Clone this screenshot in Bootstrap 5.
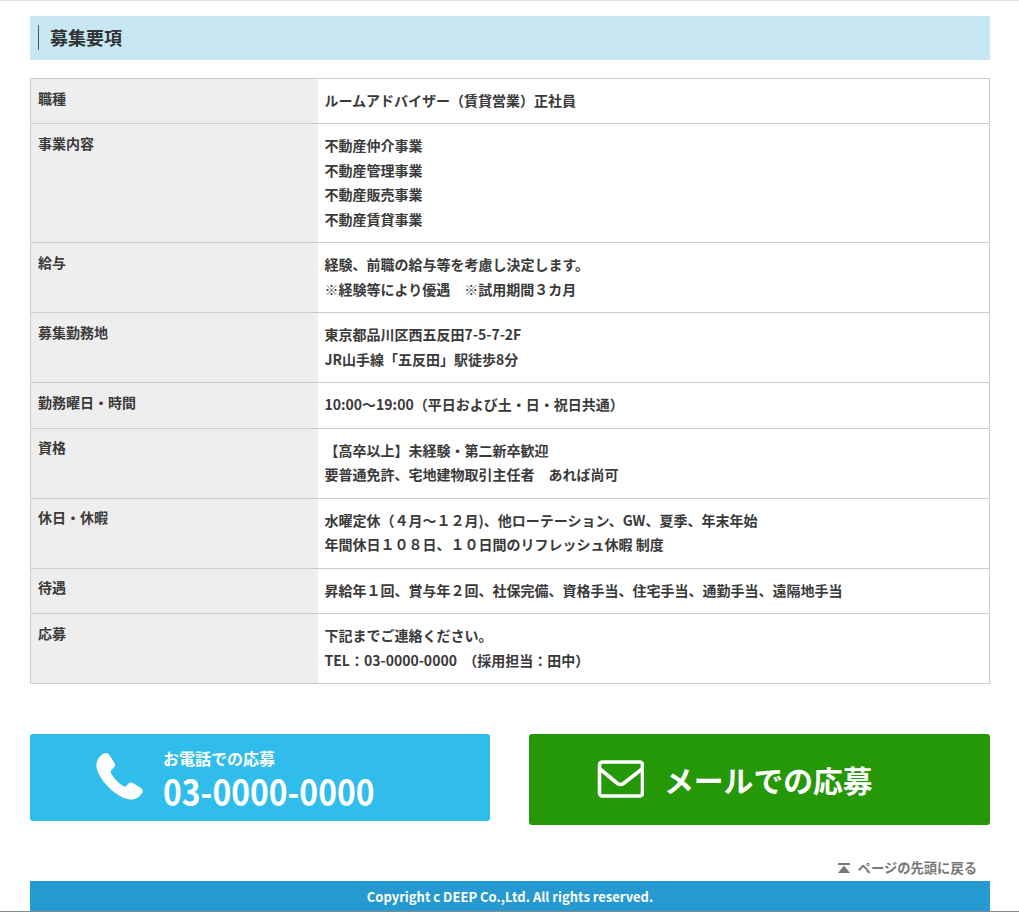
<!DOCTYPE html>
<html lang="ja">
<head>
<meta charset="utf-8">
<title>募集要項</title>
<link href="https://cdn.jsdelivr.net/npm/bootstrap@5.3.0/dist/css/bootstrap.min.css" rel="stylesheet">
<style>
html,body{height:912px;overflow:hidden}
body{font-family:"Noto Sans CJK JP","Noto Sans",sans-serif;color:#333;background:#fff;border-top:1px solid #e3e3e3;position:relative}
.pagewrap{padding:15px 29px 0 30px}
.headbar{background:#c7e8f3;height:44px;padding:0 8px;margin:0 0 18px;font-size:18px;font-weight:700;color:#333;display:flex;align-items:center}
.headbar span{border-left:1px solid #555;padding-left:11px;line-height:24px;margin-top:-2px;padding-bottom:1px}
.jobtable{width:100%;border-collapse:collapse;table-layout:fixed;margin:0;font-size:14px;font-weight:700;color:#3a3a3a}
.jobtable th,.jobtable td{border:1px solid #ccc;vertical-align:top}
.jobtable th{width:287px;background:#eee;padding:6.500px 7px 10px;font-weight:700;font-size:14px;line-height:24px;border-right:0}
.jobtable td{padding:9px 7px 11px;line-height:24.48px;border-left:0;background:#fff}
.cta-row{margin-top:50px;align-items:flex-start;justify-content:space-between}
.cta{display:flex;align-items:center;color:#fff;border-radius:3px;text-decoration:none;font-weight:700}
.cta-tel{background:#30bdeb;width:460px;height:87px;padding-left:65px}
.cta-tel svg{margin-top:-2px}
.cta-mail{background:#259807;width:461px;height:91px;padding-left:68px}
.cta-mail svg{margin-top:-2px}
.tel-sub{font-size:16px;line-height:20px;display:block;margin-top:4px}
.tel-num{font-size:36px;line-height:44px;display:block;transform:scaleX(.885);transform-origin:left center}
.tel-text{margin-left:18px;margin-top:0}
.mail-text{font-size:29.8px;margin-left:20px;margin-top:-1px;line-height:40px}
.totop{font-size:13.3px;color:#777;font-weight:700;display:flex;justify-content:flex-end;align-items:center;gap:8px;height:24px;margin-top:31px;margin-bottom:1px;padding-right:13px;line-height:24px}
.foot{background:#2699d0;color:#fff;font-size:13px;font-weight:700;text-align:center;height:30px;line-height:32px}
.baseline{position:absolute;left:0;right:0;top:910px;height:1px;background:#888}
</style>
</head>
<body>
<div class="pagewrap">
  <h2 class="headbar"><span>募集要項</span></h2>
  <table class="jobtable">
    <tbody>
      <tr><th scope="row">職種</th><td>ルームアドバイザー（賃貸営業）正社員</td></tr>
      <tr><th scope="row">事業内容</th><td>不動産仲介事業<br>不動産管理事業<br>不動産販売事業<br>不動産賃貸事業</td></tr>
      <tr><th scope="row">給与</th><td>経験、前職の給与等を考慮し決定します。<br>※経験等により優遇　※試用期間３カ月</td></tr>
      <tr><th scope="row">募集勤務地</th><td>東京都品川区西五反田7-5-7-2F<br>JR山手線「五反田」駅徒歩8分</td></tr>
      <tr><th scope="row">勤務曜日・時間</th><td>10:00～19:00（平日および土・日・祝日共通）</td></tr>
      <tr><th scope="row">資格</th><td>【高卒以上】未経験・第二新卒歓迎<br>要普通免許、宅地建物取引主任者　あれば尚可</td></tr>
      <tr><th scope="row">休日・休暇</th><td>水曜定休（４月～１２月)、他ローテーション、GW、夏季、年末年始<br>年間休日１０８日、１０日間のリフレッシュ休暇 制度</td></tr>
      <tr><th scope="row">待遇</th><td>昇給年１回、賞与年２回、社保完備、資格手当、住宅手当、通勤手当、遠隔地手当</td></tr>
      <tr><th scope="row">応募</th><td>下記までご連絡ください。<br>TEL：03-0000-0000 &nbsp;（採用担当：田中）</td></tr>
    </tbody>
  </table>
  <div class="d-flex cta-row">
    <a class="cta cta-tel" href="#">
      <svg width="50" height="50" viewBox="0 0 50 50" aria-hidden="true"><path fill="#fff" d="M9 1.500C11 .5 13 1 14 2.500L19.500 11C20.500 12.700 20 14.300 18.800 15.500L16 18.500C15.500 19.200 15.500 20 16 21C18.500 26 23 31 28.500 34.200C29.500 34.800 30.300 34.600 31 34L33.500 31.500C34.800 30.300 36.500 30 38 31L46 36C48 37.300 48.300 39.300 47 41.300C44.500 45.500 40 48 35 47.500C22 46 4 29 1.500 15C.7 9.500 4 4 9 1.500Z"/></svg>
      <span class="tel-text"><span class="tel-sub">お電話での応募</span><span class="tel-num">03-0000-0000</span></span>
    </a>
    <a class="cta cta-mail" href="#">
      <svg width="47" height="38" viewBox="0 0 47 38" aria-hidden="true"><rect x="2.500" y="2" width="43" height="34" rx="3" fill="none" stroke="#fff" stroke-width="3.600"/><path d="M3 9L20.500 23.500Q23.500 25.500 26.500 23.500L45 9" fill="none" stroke="#fff" stroke-width="3.600"/></svg>
      <span class="mail-text">メールでの応募</span>
    </a>
  </div>
  <div class="totop">
    <svg width="12" height="10" viewBox="0 0 12 10" aria-hidden="true"><rect x="0" y="0" width="12" height="2" fill="#777"/><path d="M6 2.500L12 10H0Z" fill="#777"/></svg>
    <span>ページの先頭に戻る</span>
  </div>
  <footer class="foot">Copyright c DEEP Co.,Ltd. All rights reserved.</footer>
</div>
<div class="baseline"></div>
<script src="https://cdn.jsdelivr.net/npm/bootstrap@5.3.0/dist/js/bootstrap.bundle.min.js"></script>
</body>
</html>
